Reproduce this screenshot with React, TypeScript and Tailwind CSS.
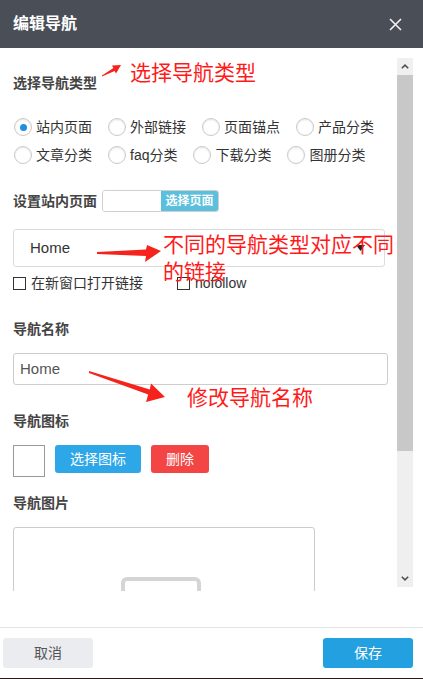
import React from "react";

const radiosTop = ["站内页面", "外部链接", "页面锚点", "产品分类"];
const radiosBottom = ["文章分类", "faq分类", "下载分类", "图册分类"];

function Radio({ label, checked }: { label: string; checked?: boolean }) {
  return (
    <label className="mr-[16px] flex shrink-0 items-center gap-[4px]">
      <span className="flex size-[18px] shrink-0 items-center justify-center rounded-full border border-[#cacaca] bg-white shadow-[inset_0_1px_2px_rgba(0,0,0,0.1)]">
        {checked && <span className="size-[7px] rounded-full bg-[#1e8fe1]" />}
      </span>
      <span className="text-[14px] leading-[18px] whitespace-nowrap text-[#333]">
        {label}
      </span>
    </label>
  );
}

function Label({ children }: { children: React.ReactNode }) {
  return (
    <div className="h-[20px] shrink-0 text-[14px] leading-[20px] font-bold whitespace-nowrap text-[#444]">
      {children}
    </div>
  );
}

function Checkbox({ label }: { label: string }) {
  return (
    <label className="flex items-center gap-[5px]">
      <span className="size-[13px] border border-[#333] bg-white" />
      <span className="text-[14px] leading-[20px] whitespace-nowrap text-[#333]">{label}</span>
    </label>
  );
}

export default function App() {
  return (
    <div className="flex h-[679px] w-[423px] flex-col bg-white font-['Liberation_Sans','Noto_Sans_CJK_SC',sans-serif]">
      {/* header */}
      <div className="flex h-[48px] shrink-0 items-center justify-between bg-[#4a4e57] pr-[21px] pl-[13px]">
        <span className="text-[16px] font-bold text-white">编辑导航</span>
        <svg width="13" height="13" viewBox="0 0 13 13">
          <path d="M1 1L12 12M12 1L1 12" stroke="#f2f2f2" strokeWidth="1.6" />
        </svg>
      </div>

      {/* body */}
      <div className="flex h-[543px] shrink-0">
        <div className="relative w-[397px] overflow-hidden pt-[25px] pr-[9px] pl-[13px]">
          <Label>选择导航类型</Label>

          <div className="mt-[20px] flex h-[28px] items-center pl-[1px]">
            {radiosTop.map((r, i) => (
              <Radio key={r} label={r} checked={i === 0} />
            ))}
          </div>
          <div className="flex h-[28px] items-center pl-[1px]">
            {radiosBottom.map((r) => (
              <Radio key={r} label={r} />
            ))}
          </div>

          <div className="mt-[21px] flex h-[22px] items-center gap-[5px]">
            <Label>设置站内页面</Label>
            <div className="flex h-[22px] w-[117px] overflow-hidden rounded-[3px] border border-[#cfcfcf]">
              <div className="w-[58px] bg-white" />
              <div className="flex flex-1 items-center justify-center bg-[#5bbfdd] text-[12px] font-bold text-white">
                选择页面
              </div>
            </div>
          </div>

          <div className="mt-[17px] flex h-[38px] w-[372px] items-center justify-between rounded-[3px] border border-[#dcdcdc] pr-[19px] pl-[16px]">
            <span className="text-[15px] text-[#333]">Home</span>
            <svg width="9" height="6" viewBox="0 0 9 6">
              <path d="M0 0H9L4.5 6Z" fill="#222" />
            </svg>
          </div>

          <div className="mt-[6px] flex h-[20px] items-center gap-[34px]">
            <Checkbox label="在新窗口打开链接" />
            <Checkbox label="nofollow" />
          </div>

          <div className="mt-[26px]">
            <Label>导航名称</Label>
          </div>
          <div className="mt-[14px] flex h-[32px] w-[375px] items-center rounded-[3px] border border-[#cdcdcd] pl-[6px] text-[15px] text-[#555]">
            Home
          </div>

          <div className="mt-[26px]">
            <Label>导航图标</Label>
          </div>
          <div className="mt-[14px] flex h-[32px] items-start gap-[10px]">
            <div className="size-[32px] border border-[#999]" />
            <button className="h-[28px] w-[86px] rounded-[3px] bg-[#2ea7e8] text-[14px] text-white">
              选择图标
            </button>
            <button className="h-[28px] w-[58px] rounded-[3px] bg-[#f44545] text-[14px] text-white">
              删除
            </button>
          </div>

          <div className="mt-[16px]">
            <Label>导航图片</Label>
          </div>
          <div className="mt-[14px] h-[150px] w-[302px] rounded-[3px] border border-[#cccccc] pt-[49px] pl-[107px]">
            <div className="h-[60px] w-[80px] rounded-[6px] border-[4px] border-[#d5d5d5]" />
          </div>

          {/* red annotations */}
          <svg
            className="pointer-events-none absolute top-0 left-0"
            width="397"
            height="543"
            viewBox="0 48 397 543"
          >
            <polygon
              points="102,75.5 113.4,68.1 112,65.4 121,65 116,73.5 114.6,70.9 102,76.5"
              fill="#f5231b"
            />
            <polygon
              points="97,252 146,249.5 147,245 161,251 145,262 146,256 97,254"
              fill="#f5231b"
            />
            <polygon
              points="89,371 149.8,389.6 151,383.5 165,397 146,402 148.2,394.4 89,373"
              fill="#f5231b"
            />
          </svg>
          <div className="pointer-events-none absolute top-[14px] left-[130px] text-[21px] leading-[21px] whitespace-nowrap text-[#ff1a1a]">
            选择导航类型
          </div>
          <div className="pointer-events-none absolute top-[183px] left-[163px] text-[21px] leading-[27px] whitespace-nowrap text-[#ff1a1a]">
            不同的导航类型对应不同
            <br />
            的链接
          </div>
          <div className="pointer-events-none absolute top-[339px] left-[187px] text-[21px] leading-[21px] whitespace-nowrap text-[#ff1a1a]">
            修改导航名称
          </div>
        </div>

        {/* scrollbar */}
        <div className="mt-[10px] flex h-[529px] w-[16px] flex-col bg-[#efefef]">
          <div className="flex h-[17px] items-center justify-center bg-[#f0f0f0]">
            <svg width="8" height="5" viewBox="0 0 8 5">
              <path d="M0.8 4.3L4 1.2L7.2 4.3" stroke="#505050" strokeWidth="1.6" fill="none" />
            </svg>
          </div>
          <div className="h-[376px] bg-[#c8c8c8]" />
          <div className="flex-1" />
          <div className="flex h-[17px] items-center justify-center">
            <svg width="8" height="5" viewBox="0 0 8 5">
              <path d="M0.8 0.7L4 3.8L7.2 0.7" stroke="#505050" strokeWidth="1.6" fill="none" />
            </svg>
          </div>
        </div>
      </div>

      <div className="h-[36px] shrink-0" />

      {/* footer */}
      <div className="flex h-[52px] shrink-0 items-start justify-between border-t border-b border-t-[#e4e4e4] border-b-[#2a1b1b] pt-[10px] pr-[10px] pl-[3px]">
        <button className="h-[30px] w-[90px] rounded-[3px] bg-[#ebecf0] text-[14px] text-[#555]">
          取消
        </button>
        <button className="h-[30px] w-[90px] rounded-[3px] bg-[#22a0e0] text-[14px] text-white">
          保存
        </button>
      </div>
    </div>
  );
}
